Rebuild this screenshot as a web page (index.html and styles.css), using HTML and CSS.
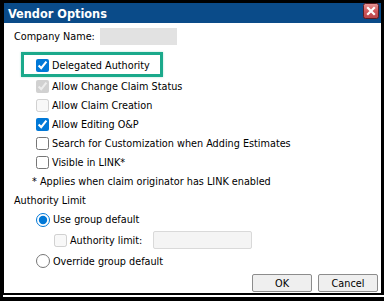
FILE: index.html
```html
<!DOCTYPE html>
<html>
<head>
<meta charset="utf-8">
<link rel="stylesheet" href="styles.css">
</head>
<body>
<div class="win">
  <div class="titlebar">
    <span class="title">Vendor Options</span>
    <span class="close">
      <svg width="16" height="16" viewBox="0 0 16 16">
        <defs>
          <linearGradient id="g" x1="0" y1="0" x2="0" y2="1">
            <stop offset="0" stop-color="#e79a9a"/>
            <stop offset="0.5" stop-color="#d0585c"/>
            <stop offset="1" stop-color="#b8444a"/>
          </linearGradient>
        </defs>
        <rect x="0.5" y="0.5" width="15" height="15" rx="2" fill="url(#g)" stroke="#5c1c20"/>
        <path d="M5 5 L11 11 M11 5 L5 11" stroke="#ffffff" stroke-width="2.2" stroke-linecap="square"/>
      </svg>
    </span>
  </div>
  <div class="content">
    <div class="company">
      <span>Company Name:</span>
      <span class="blur"></span>
    </div>
    <div class="options">
      <label class="row hl"><input type="checkbox" checked><span>Delegated Authority</span></label>
      <label class="row"><input type="checkbox" checked disabled><span>Allow Change Claim Status</span></label>
      <label class="row"><input type="checkbox" disabled><span>Allow Claim Creation</span></label>
      <label class="row"><input type="checkbox" checked><span>Allow Editing O&amp;P</span></label>
      <label class="row"><input type="checkbox"><span>Search for Customization when Adding Estimates</span></label>
      <label class="row"><input type="checkbox"><span>Visible in LINK*</span></label>
    </div>
    <div class="note">* Applies when claim originator has LINK enabled</div>
    <div class="section">Authority Limit</div>
    <label class="radio r1"><input type="radio" name="al" checked><span>Use group default</span></label>
    <div class="limit">
      <input type="checkbox" disabled><span>Authority limit:</span>
      <span class="field"></span>
    </div>
    <label class="radio r2"><input type="radio" name="al"><span>Override group default</span></label>
    <div class="footer">
      <button class="btn">OK</button>
      <button class="btn">Cancel</button>
    </div>
  </div>
</div>
<div class="frameline"></div>
</body>
</html>
```

FILE: styles.css
```css
html, body {
  margin: 0;
  padding: 0;
}
body {
  background: #000;
  width: 384px;
  height: 301px;
  overflow: hidden;
  font-family: "DejaVu Sans Condensed", "DejaVu Sans", sans-serif;
  font-size: 10.75px;
  color: #000;
}
.win {
  margin: 3px 0 0 4px;
  width: 377px;
}
.titlebar {
  height: 20px;
  background: #0a4b89;
  display: flex;
  justify-content: space-between;
  align-items: center;
}
.title {
  color: #fff;
  font-weight: bold;
  font-size: 12.6px;
  padding-left: 4px;
}
.close {
  align-self: flex-start;
  width: 16px;
  height: 16px;
  margin-right: 2px;
  display: block;
}
.close svg {
  display: block;
}
.content {
  background: #fff;
  height: 270px;
  padding-left: 10px;
  box-sizing: border-box;
  display: flex;
  flex-direction: column;
}
.company {
  margin-top: 5px;
  height: 17px;
  display: flex;
  align-items: center;
  gap: 5px;
}
.blur {
  width: 77px;
  height: 17px;
  background: #e2e2e2;
}
.options {
  margin-top: 7px;
  margin-left: 7px;
  display: flex;
  flex-direction: column;
}
.row {
  display: flex;
  align-items: center;
  height: 19px;
  padding-left: 15px;
  gap: 3px;
}
.row.hl {
  width: 142px;
  box-sizing: border-box;
  border: 3px solid #1ba98b;
  padding-left: 12px;
  padding-top: 1px;
  height: 25px;
  box-shadow: 0 0 2px rgba(27, 169, 139, 0.35);
}
input[type=checkbox], input[type=radio] {
  margin: 0;
  width: 13px;
  height: 13px;
  accent-color: #0078d7;
}
input[type=radio] {
  width: 14px;
  height: 14px;
}
.note {
  height: 19px;
  line-height: 19px;
  padding-left: 18px;
}
.section {
  height: 19px;
  line-height: 19px;
}
.radio {
  display: flex;
  align-items: center;
  gap: 3px;
  padding-left: 22px;
}
.r1 {
  height: 19px;
}
.r2 {
  height: 20px;
}
.limit {
  height: 22px;
  display: flex;
  align-items: center;
  padding-left: 40px;
  gap: 3px;
}
.field {
  margin-left: 8px;
  width: 97px;
  height: 16px;
  border: 1px solid #d9d9d9;
  border-radius: 2px;
  background: #f4f4f4;
}
.footer {
  margin-top: auto;
  display: flex;
  justify-content: flex-end;
  gap: 6px;
  padding-right: 3px;
  padding-bottom: 1px;
}
.btn {
  width: 60px;
  height: 18px;
  padding: 0;
  font-family: inherit;
  font-size: 10.75px;
  color: #000;
  background: #efefef;
  border: 1px solid #8c8c8c;
  border-radius: 2px;
}
.frameline {
  margin: 2px 0 0 3px;
  height: 2px;
  background: #fff;
}
```
